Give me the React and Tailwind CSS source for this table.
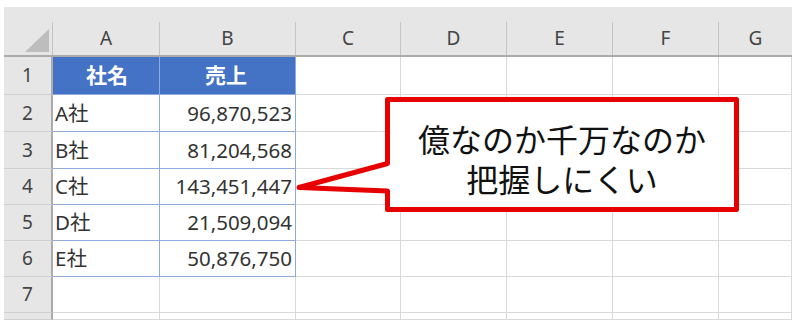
import React from 'react'

const cols = ['A', 'B', 'C', 'D', 'E', 'F', 'G']

const rows = [
  { n: 1, h: 'h-[38px]', name: '社名', sales: '売上', head: true },
  { n: 2, h: 'h-[37px]', name: 'A社', sales: '96,870,523' },
  { n: 3, h: 'h-[37px]', name: 'B社', sales: '81,204,568' },
  { n: 4, h: 'h-[36px]', name: 'C社', sales: '143,451,447' },
  { n: 5, h: 'h-[36px]', name: 'D社', sales: '21,509,094' },
  { n: 6, h: 'h-[36px]', name: 'E社', sales: '50,876,750' },
  { n: 7, h: 'h-[36px]' },
  { n: '', h: 'h-[7px]' },
]

// widths of columns C..G
const restCols = ['w-[105px]', 'w-[106px]', 'w-[106px]', 'w-[106px]', 'w-[73px]']

function HeaderRow() {
  return (
    <div className="flex h-[50px] bg-[#e6e6e6] border-b-2 border-[#ababab]">
      {/* corner */}
      <div className="w-[49px] flex items-end justify-between">
        <svg width="46" height="48" viewBox="0 0 46 48" className="mt-auto">
          <polygon points="21,45 45,45 45,22" fill="#bdbdbd" />
        </svg>
        <div className="w-px h-[33px] bg-[#c4c4c4]" />
      </div>
      {cols.map((c, i) => (
        <div
          key={c}
          className={`${i === 0 ? 'w-[107px]' : i === 1 ? 'w-[136px]' : restCols[i - 2]} flex items-end`}
        >
          <div className="flex-1 h-full flex items-center justify-center pt-[14px] text-[19px] text-[#444]">
            {c}
          </div>
          {i < 6 && <div className="w-px h-[33px] bg-[#c4c4c4]" />}
        </div>
      ))}
    </div>
  )
}

function Row({ r }) {
  const inTable = r.n >= 1 && r.n <= 6
  return (
    <div className={`flex ${r.h}`}>
      <div className="w-[49px] bg-[#e6e6e6] border-r-2 border-b border-r-[#ababab] border-b-[#cfcfcf] flex items-center justify-center text-[19px] text-[#444]">
        {r.n}
      </div>
      <div
        className={`w-[107px] border-r border-b flex items-center pl-[2px] ${
          inTable ? 'border-[#8faadc]' : 'border-[#d9d9d9]'
        } ${r.head ? 'bg-[#4472c4] text-white font-bold justify-center text-[21px]' : 'text-[#333] text-[20.5px]'}`}
      >
        {r.name}
      </div>
      <div
        className={`w-[136px] border-r border-b flex items-center pr-[3px] ${
          inTable ? 'border-[#8faadc]' : 'border-[#d9d9d9]'
        } ${r.head ? 'bg-[#4472c4] text-white font-bold justify-center text-[21px]' : 'justify-end text-[#333] text-[20.5px]'}`}
      >
        {r.sales}
      </div>
      {restCols.map((w, i) => (
        <div key={i} className={`${w} border-r border-b border-[#d9d9d9]`} />
      ))}
    </div>
  )
}

export default function App() {
  return (
    <div
      className="relative w-[800px] h-[324px] bg-white overflow-hidden"
      style={{ fontFamily: '"Noto Sans", "Noto Sans CJK JP", sans-serif' }}
    >
      <div className="ml-[4px] pt-[7px] w-[788px]">
        <HeaderRow />
        {rows.map((r, i) => (
          <Row key={i} r={r} />
        ))}
      </div>

      {/* callout */}
      <svg
        className="absolute left-0 top-0 pointer-events-none"
        width="800"
        height="324"
        viewBox="0 0 800 324"
      >
        <path
          d="M387.5 99.5 L736.5 99.5 L736.5 209.5 L387.5 209.5 L387.5 191 L299 187.5 L387.5 163.5 Z"
          fill="#fff"
          stroke="#e60000"
          strokeWidth="5"
          strokeLinejoin="round"
        />
      </svg>
      <div
        className="absolute left-[390px] top-[118px] w-[344px] flex flex-col items-center text-[32px] leading-[40px] text-[#111]"
        style={{ fontFamily: '"Noto Sans CJK JP", sans-serif' }}
      >
        <span className="h-[40px]">億なのか千万なのか</span>
        <span className="h-[40px]">把握しにくい</span>
      </div>
    </div>
  )
}
